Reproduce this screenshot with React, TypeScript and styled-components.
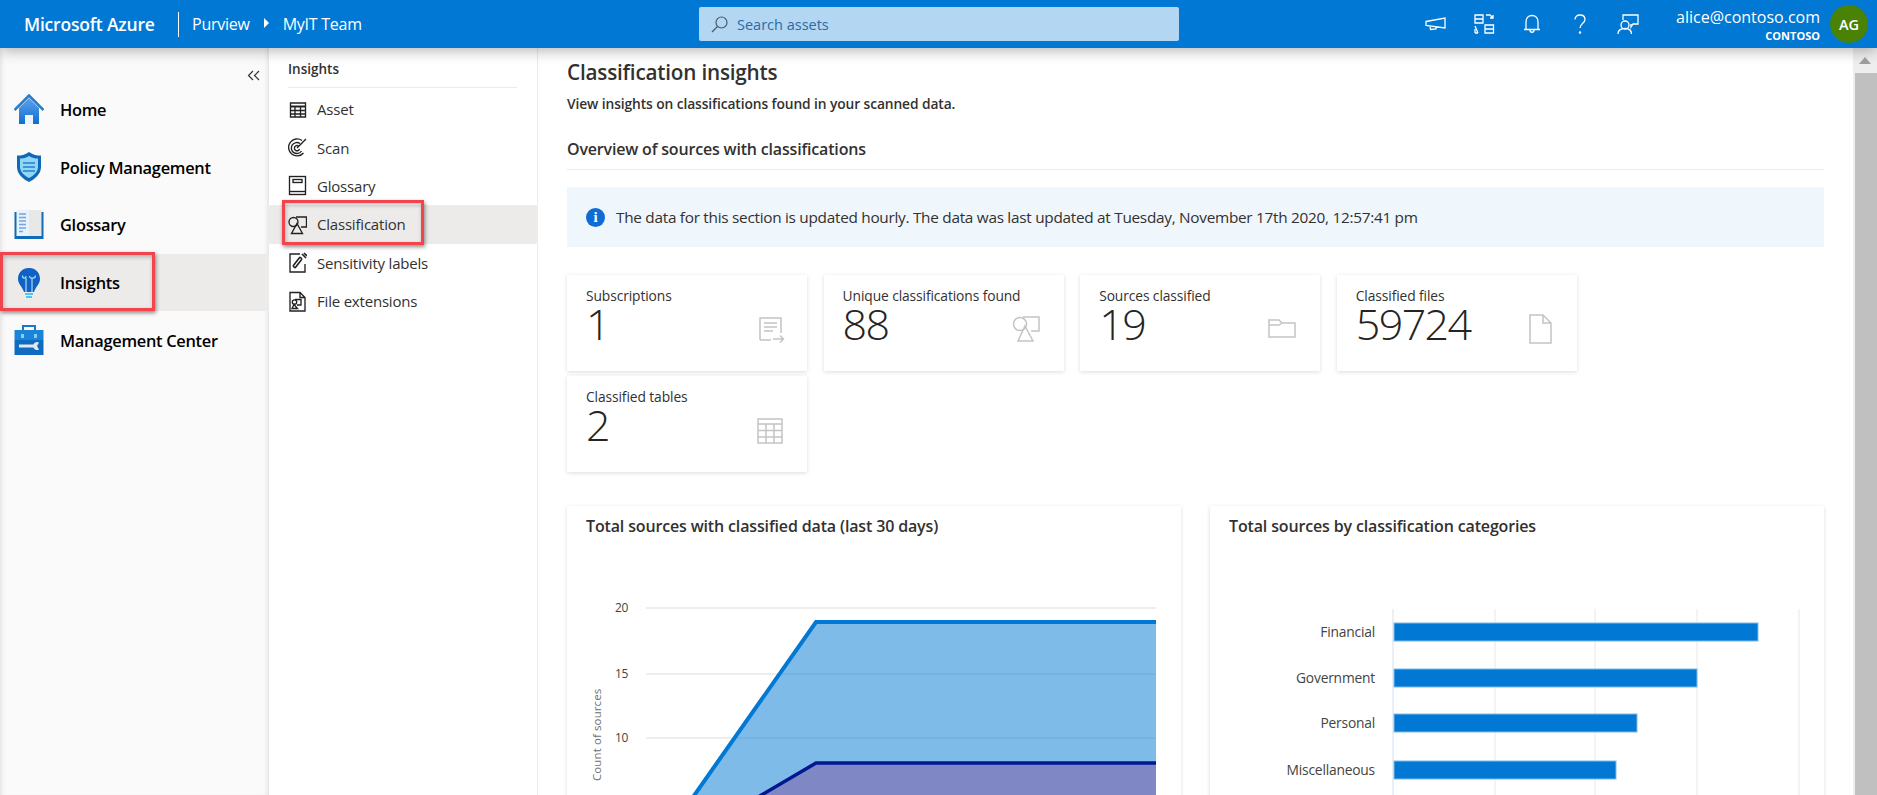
import React from 'react';
import styled, { createGlobalStyle } from 'styled-components';

const GlobalStyle = createGlobalStyle`
  html, body {
    margin: 0;
    padding: 0;
    height: 100%;
    overflow: hidden;
    background: #fff;
    font-family: "Open Sans", "Noto Sans", "Liberation Sans", sans-serif;
    color: #323130;
  }
  * { box-sizing: border-box; }
`;

const Page = styled.div`
  display: flex;
  flex-direction: column;
  height: 795px;
  overflow: hidden;
`;

const TopBar = styled.header`
  height: 48px;
  flex: none;
  display: flex;
  align-items: center;
  background: #0078d4;
  color: #fff;
  position: relative;
  z-index: 3;
  box-shadow: 0 2px 14px rgba(0, 0, 0, 0.32);
`;

const Brand = styled.div`
  width: 178px;
  padding-left: 24px;
  font-size: 17.5px;
  font-weight: 600;
  letter-spacing: -0.2px;
`;

const Crumbs = styled.div`
  width: 521px;
  height: 25px;
  display: flex;
  align-items: center;
  padding-left: 13px;
  border-left: 1px solid #fff;
  font-size: 16px;
  letter-spacing: -0.25px;
`;

const CrumbCaret = styled.span`
  width: 0;
  height: 0;
  margin: 0 14px 2px 14px;
  border-left: 5px solid #fff;
  border-top: 5px solid transparent;
  border-bottom: 5px solid transparent;
`;

const SearchBox = styled.div`
  width: 480px;
  height: 34px;
  display: flex;
  align-items: center;
  gap: 9px;
  padding-left: 12px;
  background: #b3d6f2;
  border-radius: 2px;
  color: #2b6ba6;
  font-size: 14.5px;
`;

const IconTray = styled.div`
  display: flex;
  align-items: center;
  margin-left: 246px;
  gap: 26px;
`;

const TrayIcon = styled.svg`
  width: 22px;
  height: 22px;
  fill: none;
  stroke: #fff;
  stroke-width: 1.3;
`;

const Account = styled.div`
  margin-left: auto;
  text-align: right;
  padding-top: 1px;
`;

const Email = styled.div`
  font-size: 16px;
  line-height: 21px;
`;

const Tenant = styled.div`
  font-size: 11px;
  line-height: 15px;
  font-weight: 700;
`;

const Avatar = styled.div`
  width: 38px;
  height: 38px;
  margin: 0 9px 0 10px;
  border-radius: 50%;
  background: #498205;
  display: flex;
  align-items: center;
  justify-content: center;
  font-size: 14.5px;
  font-weight: 600;
`;

const Body = styled.div`
  flex: 1;
  min-height: 0;
  display: flex;
`;

const MainNav = styled.nav`
  width: 269px;
  flex: none;
  background: #fafafa;
  position: relative;
  box-shadow: inset 5px 0 5px -4px rgba(0, 0, 0, 0.12), inset -5px 0 5px -4px rgba(0, 0, 0, 0.12);
`;

const CollapseRow = styled.div`
  height: 33px;
  display: flex;
  justify-content: flex-end;
  align-items: flex-end;
  padding-right: 9px;
`;

const NavRow = styled.div<{ $active?: boolean }>`
  height: 57.6px;
  display: flex;
  align-items: center;
  gap: 16px;
  padding-left: 14px;
  font-size: 16.4px;
  font-weight: 600;
  letter-spacing: -0.28px;
  color: #000;
  background: ${(p) => (p.$active ? '#edebe9' : 'transparent')};
`;

const NavIcon = styled.svg`
  width: 30px;
  height: 32px;
  flex: none;
`;

const SubNav = styled.nav`
  width: 269px;
  flex: none;
  background: #fff;
  border-right: 1px solid #edebe9;
  position: relative;
`;

const SubNavTitle = styled.div`
  margin: 0 20px 0 19px;
  height: 40px;
  padding-top: 12px;
  font-size: 13.5px;
  font-weight: 600;
  border-bottom: 1px solid #edebe9;
`;

const SubNavList = styled.div`
  padding-top: 2px;
`;

const SubNavRow = styled.div<{ $active?: boolean }>`
  height: 38.4px;
  display: flex;
  align-items: center;
  gap: 10px;
  padding-left: 19px;
  font-size: 15px;
  letter-spacing: -0.2px;
  border-radius: 2px;
  background: ${(p) => (p.$active ? '#edebe9' : 'transparent')};
`;

const SubIcon = styled.svg`
  width: 19px;
  height: 21px;
  flex: none;
  fill: none;
  stroke: #222;
  stroke-width: 1.35;
`;

const RedBox = styled.div<{ $wide: number; $tall: number; $left: number; $top: number }>`
  position: absolute;
  left: ${(p) => p.$left}px;
  top: ${(p) => p.$top}px;
  width: ${(p) => p.$wide}px;
  height: ${(p) => p.$tall}px;
  border: 3px solid #f1444c;
  box-shadow: 1px 2px 4px rgba(0, 0, 0, 0.45), inset 1px 2px 4px rgba(0, 0, 0, 0.25);
  z-index: 2;
`;

const Main = styled.main`
  flex: 1;
  min-width: 0;
  padding: 0 29px 0 29px;
  overflow: hidden;
`;

const Title = styled.h1`
  margin: 11px 0 0;
  font-size: 20.7px;
  line-height: 26px;
  font-weight: 600;
  letter-spacing: -0.2px;
`;

const Subtitle = styled.p`
  margin: 10px 0 0;
  font-size: 13.8px;
  line-height: 18px;
  font-weight: 600;
  letter-spacing: -0.1px;
`;

const SectionTitle = styled.h2`
  margin: 25px 0 0;
  padding-bottom: 9px;
  font-size: 16px;
  line-height: 22px;
  font-weight: 600;
  letter-spacing: -0.18px;
  border-bottom: 1px solid #edebe9;
`;

const InfoBar = styled.div`
  margin-top: 17px;
  height: 60px;
  display: flex;
  align-items: center;
  gap: 11px;
  padding-left: 19px;
  background: #eff6fc;
  font-size: 15.35px;
  letter-spacing: -0.28px;
`;

const InfoDot = styled.span`
  width: 19px;
  height: 19px;
  border-radius: 50%;
  background: #0f6cd6;
  color: #fff;
  display: flex;
  align-items: center;
  justify-content: center;
  font-family: "Liberation Serif", serif;
  font-size: 15px;
  font-weight: 700;
`;

const StatGrid = styled.div`
  margin-top: 28px;
  display: grid;
  grid-template-columns: repeat(4, 240px);
  column-gap: 16.6px;
  row-gap: 5px;
`;

const StatCard = styled.div`
  height: 96px;
  padding: 12px 19px;
  background: #fff;
  box-shadow: 0 1px 4px rgba(0, 0, 0, 0.14);
  position: relative;
`;

const StatLabel = styled.div`
  font-size: 13.8px;
  line-height: 17px;
  letter-spacing: -0.1px;
`;

const StatValue = styled.div`
  font-size: 43px;
  line-height: 40px;
  font-weight: 300;
  letter-spacing: -1.6px;
  color: #252423;
`;

const StatIcon = styled.svg`
  position: absolute;
  right: 22px;
  top: 39px;
  width: 30px;
  height: 30px;
  fill: none;
  stroke: #c4c4c4;
  stroke-width: 1.5;
`;

const Charts = styled.div`
  margin-top: 34px;
  display: grid;
  grid-template-columns: 614px 614px;
  column-gap: 29px;
`;

const ChartCard = styled.section`
  height: 320px;
  padding: 9px 19px;
  background: #fff;
  box-shadow: 0 1px 4px rgba(0, 0, 0, 0.14);
`;

const ChartTitle = styled.h3`
  margin: 0;
  font-size: 16px;
  line-height: 22px;
  font-weight: 600;
  letter-spacing: -0.15px;
`;

const ChartSvg = styled.svg`
  display: block;
  width: 614px;
  height: 280px;
  margin: 0 -19px;
  font-family: "Open Sans", "Noto Sans", sans-serif;
  overflow: hidden;
`;

const Scrollbar = styled.div`
  width: 24px;
  flex: none;
  background: #eeeeee;
  display: flex;
  flex-direction: column;
  align-items: flex-end;
`;

const ScrollArrow = styled.div`
  align-self: center;
  margin-top: 9px;
  width: 0;
  height: 0;
  border-left: 6px solid transparent;
  border-right: 6px solid transparent;
  border-bottom: 7px solid #a0a0a0;
`;

const ScrollThumb = styled.div`
  width: 22px;
  flex: 1;
  margin-top: 9px;
  background: #c0c0c0;
`;

const HomeIcon = () => (
  <NavIcon viewBox="0 0 30 32">
    <defs>
      <linearGradient id="navBlue" x1="0" y1="0" x2="0" y2="1">
        <stop offset="0" stopColor="#5ea0ef" />
        <stop offset="1" stopColor="#0f6fd0" />
      </linearGradient>
    </defs>
    <path d="M5 14 L15 4 L25 14 V30 H5 Z" fill="url(#navBlue)" />
    <path d="M0.5 16 L15 1.5 L29.5 16" fill="none" stroke="#2b7cc4" strokeWidth="2.6" />
    <rect x="11" y="21" width="8" height="9" fill="#eef3f8" />
  </NavIcon>
);

const ShieldIcon = () => (
  <NavIcon viewBox="0 0 30 32">
    <path d="M15 1 C19 4 23 4.5 27 4.5 V16 C27 23 21 28 15 31 C9 28 3 23 3 16 V4.5 C7 4.5 11 4 15 1 Z" fill="#0f68b8" />
    <path d="M15 5 C18 7 21 7.5 24 7.5 V16 C24 21 19 25 15 27 C11 25 6 21 6 16 V7.5 C9 7.5 12 7 15 5 Z" fill="#8fd6f7" />
    <path d="M9 12 H21 M9 16 H21 M9 20 H21" stroke="#3f96d6" strokeWidth="1.8" />
  </NavIcon>
);

const BookIcon = () => (
  <NavIcon viewBox="0 0 30 32">
    <rect x="0.5" y="3" width="29" height="27" fill="#0f6cb8" />
    <rect x="2.5" y="1" width="12.5" height="26" fill="#e9f1fb" />
    <rect x="15" y="1" width="12.5" height="26" fill="#e8e8e8" />
    <path d="M5 5 H12 M5 8.5 H12 M5 12 H12 M5 15.5 H12 M5 19 H12 M5 22.5 H9" stroke="#6ea7e8" strokeWidth="1.4" />
  </NavIcon>
);

const BulbIcon = () => (
  <NavIcon viewBox="0 0 30 32">
    <path d="M15 1 C23 1 26 7 26 12 C26 17 22 19 20 25 H10 C8 19 4 17 4 12 C4 7 7 1 15 1 Z" fill="#0f62c4" />
    <path d="M11 26 H19 V28 H11 Z M12 29 H18 V31 H12 Z" fill="#4ec6ee" />
    <path d="M12 25 V11 M18 25 V11 M8.5 8.5 C8.5 12 12 12 12 9 M15.5 9 C15.5 12 21.5 12 21.5 8.5" fill="none" stroke="#a5dcf7" strokeWidth="1.2" />
  </NavIcon>
);

const ToolboxIcon = () => (
  <NavIcon viewBox="0 0 30 32">
    <path d="M9 6 V2 H21 V6" fill="none" stroke="#1a78c8" strokeWidth="2" />
    <rect x="0.5" y="6" width="29" height="10" fill="#1b84d8" />
    <rect x="0.5" y="16" width="29" height="15" fill="#0f6cc0" />
    <rect x="7" y="10" width="3" height="4" fill="#7fd0f5" />
    <rect x="20" y="10" width="3" height="4" fill="#7fd0f5" />
    <path d="M5 22 H20" stroke="#e4e8ec" strokeWidth="3" />
    <path d="M25 18.5 A4 4 0 1 0 25 25.5 L23 22 Z" fill="#e4e8ec" />
  </NavIcon>
);

const subNavItems: { label: string; active?: boolean; icon: React.ReactNode }[] = [
  {
    label: 'Asset',
    icon: (
      <>
        <path d="M2.5 4 H17.5 V18 H2.5 Z M2.5 11.5 H17.5 M2.5 15 H17.5 M7 7 V18 M12.5 7 V18" />
        <path d="M2.5 7.5 H17.5" strokeWidth="2" />
      </>
    ),
  },
  {
    label: 'Scan',
    icon: (
      <path d="M15.5 16 A8.5 8.5 0 1 1 14 3.5 M13.5 14 A5.5 5.5 0 1 1 12 6.5 M11.5 12 A2.6 2.6 0 1 1 10.5 9 M9 11 L18 2" />
    ),
  },
  {
    label: 'Glossary',
    icon: (
      <>
        <rect x="1.5" y="1.5" width="16" height="18" />
        <path d="M1.5 16.5 H17.5" />
        <rect x="5" y="4.5" width="9" height="3" />
      </>
    ),
  },
  {
    label: 'Classification',
    active: true,
    icon: (
      <>
        <circle cx="5.5" cy="8" r="4.5" />
        <path d="M8 3 H18.5 V13 H13" />
        <path d="M9 9.5 L14.5 19.5 H3.5 Z" />
      </>
    ),
  },
  {
    label: 'Sensitivity labels',
    icon: (
      <>
        <path d="M12 2 H2 V20 H17 V12" />
        <path d="M5 14 L12 5 M7 16 L14 7 M5 14 L7 16 M12 5 L14 7" strokeWidth="1.6" />
        <path d="M14 2 L18 6 M16 1 L19 4" strokeWidth="1.6" />
      </>
    ),
  },
  {
    label: 'File extensions',
    icon: (
      <>
        <path d="M2 1.5 H12 L17 6.5 V20 H2 Z M12 1.5 V6.5 H17" />
        <circle cx="6.5" cy="11" r="2.2" />
        <path d="M7 8.5 H13 V14 H9 M6 13.5 L9.5 17.5 H4 Z" />
      </>
    ),
  },
];

const stats: { label: string; value: string; icon: React.ReactNode }[] = [
  {
    label: 'Subscriptions',
    value: '1',
    icon: (
      <path d="M5 26 V4 H26 V19 M9 9 H22 M9 13 H22 M9 17 H18 M5 26 H16 M18 25 H28 M25 21.5 L28.5 25 L25 28.5" />
    ),
  },
  {
    label: 'Unique classifications found',
    value: '88',
    icon: (
      <>
        <circle cx="8" cy="10" r="6.5" />
        <path d="M11 3 H27 V17 H19" />
        <path d="M13 12 L21 27 H6 Z" />
      </>
    ),
  },
  {
    label: 'Sources classified',
    value: '19',
    icon: <path d="M1 23 V6 H11 L14 9 H27 V23 Z M1 11 H11 L14 9" />,
  },
  {
    label: 'Classified files',
    value: '59724',
    icon: <path d="M5 1 H18 L26 9 V29 H5 Z M18 1 V9 H26" />,
  },
  {
    label: 'Classified tables',
    value: '2',
    icon: (
      <path d="M3 4 H27 V28 H3 Z M3 9 H27 M3 15.5 H27 M3 22 H27 M11 9 V28 M19 9 V28" />
    ),
  },
];

const categories = [
  { name: 'Financial', y: 116, end: 364 },
  { name: 'Government', y: 162, end: 303 },
  { name: 'Personal', y: 207, end: 243 },
  { name: 'Miscellaneous', y: 254, end: 222 },
];

// x positions in the svgs are relative to the card, y to the top of the svg
const AreaChart = () => (
  <ChartSvg viewBox="0 0 614 280">
    {[
      { label: '20', y: 71 },
      { label: '15', y: 137 },
      { label: '10', y: 201 },
    ].map((tick) => (
      <g key={tick.label}>
        <line x1="79" x2="589" y1={tick.y} y2={tick.y} stroke="#e8e8e8" strokeWidth="1.5" />
        <text x="61" y={tick.y + 4} textAnchor="end" fontSize="12" letterSpacing="-0.4" fill="#444">
          {tick.label}
        </text>
      </g>
    ))}
    <text transform="translate(34 244) rotate(-90)" fontSize="11.5" fill="#707070" letterSpacing="0.1">
      Count of sources
    </text>
    <path d="M112 280 L249 85 H589 V280 Z" fill="#0078d4" fillOpacity="0.5" />
    <path d="M112 280 L249 85 H589" fill="none" stroke="#0078d4" strokeWidth="4" />
    <path d="M157 280 L249 226 H589 V280 Z" fill="#7f88c4" />
    <path d="M157 280 L249 226 H589" fill="none" stroke="#00188f" strokeWidth="3.5" />
  </ChartSvg>
);

const BarChart = () => (
  <ChartSvg viewBox="0 0 614 280">
    {[183, 285, 385, 487, 589].map((x) => (
      <line key={x} x1={x} x2={x} y1="72" y2="280" stroke={x === 183 ? '#d5e0f0' : '#e8e8e8'} strokeWidth="1" />
    ))}
    {categories.map((c) => (
      <g key={c.name}>
        <rect x="184" y={c.y - 30} width={c.end} height="18" fill="#0078d4" stroke="#7fbbea" strokeWidth="1" />
        <text x="165" y={c.y - 16} textAnchor="end" fontSize="13.8" letterSpacing="-0.2" fill="#444">
          {c.name}
        </text>
      </g>
    ))}
  </ChartSvg>
);

const App: React.FC = () => (
  <Page>
    <GlobalStyle />
    <TopBar>
      <Brand>Microsoft Azure</Brand>
      <Crumbs>
        Purview
        <CrumbCaret />
        MyIT Team
      </Crumbs>
      <SearchBox>
        <svg width="17" height="17" viewBox="0 0 17 17" fill="none" stroke="#4a5a68" strokeWidth="1.2">
          <circle cx="10.5" cy="6.5" r="5.5" />
          <path d="M6.5 10.5 L1 16" />
        </svg>
        Search assets
      </SearchBox>
      <IconTray>
        <TrayIcon viewBox="0 0 22 22">
          <path d="M1 8.5 L20 5 V15 L1 12.5 Z M5 13 L5.5 16.5 L11 16 V14" />
        </TrayIcon>
        <TrayIcon viewBox="0 0 22 22">
          <path d="M2 2 H10 V10 H2 Z M2 6 H10 M13 2 H17 L20 5 M20 2 V5 H17 M12 12 H20.5 V20 H12 Z M12 16 H20.5 M2 13 L5 20 M2 20 H5 M2 16 V20" />
        </TrayIcon>
        <TrayIcon viewBox="0 0 22 22">
          <path d="M5 16 V9 C5 5 7.5 2.5 11 2.5 C14.5 2.5 17 5 17 9 V16 M3 16.5 H19 M9 17 C9 20 13 20 13 17" />
        </TrayIcon>
        <TrayIcon viewBox="0 0 22 22">
          <path d="M6 6.5 C6 3.5 8 2 11 2 C14 2 16 3.5 16 6.5 C16 10 11 10.5 11 15" />
          <circle cx="11" cy="19.5" r="0.6" />
        </TrayIcon>
        <TrayIcon viewBox="0 0 22 22">
          <path d="M6 7 V2 H21 V11 H16 L14 14 V11" />
          <circle cx="8" cy="12" r="4" />
          <path d="M1 21 C1 17 4 15.5 8 15.5 C12 15.5 14.5 17 14.5 21" />
        </TrayIcon>
      </IconTray>
      <Account>
        <Email>alice@contoso.com</Email>
        <Tenant>CONTOSO</Tenant>
      </Account>
      <Avatar>AG</Avatar>
    </TopBar>
    <Body>
      <MainNav>
        <CollapseRow>
          <svg width="13" height="11" viewBox="0 0 13 11" fill="none" stroke="#333" strokeWidth="1.2">
            <path d="M6 1 L1.5 5.5 L6 10 M12 1 L7.5 5.5 L12 10" />
          </svg>
        </CollapseRow>
        <NavRow><HomeIcon />Home</NavRow>
        <NavRow><ShieldIcon />Policy Management</NavRow>
        <NavRow><BookIcon />Glossary</NavRow>
        <NavRow $active><BulbIcon />Insights</NavRow>
        <NavRow><ToolboxIcon />Management Center</NavRow>
        <RedBox $left={0} $top={204} $wide={155} $tall={59} />
      </MainNav>
      <SubNav>
        <SubNavTitle>Insights</SubNavTitle>
        <SubNavList>
          {subNavItems.map((item) => (
            <SubNavRow key={item.label} $active={item.active}>
              <SubIcon viewBox="0 0 19 21">{item.icon}</SubIcon>
              {item.label}
            </SubNavRow>
          ))}
        </SubNavList>
        <RedBox $left={13} $top={152} $wide={142} $tall={45} />
      </SubNav>
      <Main>
        <Title>Classification insights</Title>
        <Subtitle>View insights on classifications found in your scanned data.</Subtitle>
        <SectionTitle>Overview of sources with classifications</SectionTitle>
        <InfoBar>
          <InfoDot>i</InfoDot>
          The data for this section is updated hourly. The data was last updated at Tuesday, November 17th 2020, 12:57:41 pm
        </InfoBar>
        <StatGrid>
          {stats.map((s) => (
            <StatCard key={s.label}>
              <StatLabel>{s.label}</StatLabel>
              <StatValue>{s.value}</StatValue>
              <StatIcon viewBox="0 0 30 30">{s.icon}</StatIcon>
            </StatCard>
          ))}
        </StatGrid>
        <Charts>
          <ChartCard>
            <ChartTitle>Total sources with classified data (last 30 days)</ChartTitle>
            <AreaChart />
          </ChartCard>
          <ChartCard>
            <ChartTitle>Total sources by classification categories</ChartTitle>
            <BarChart />
          </ChartCard>
        </Charts>
      </Main>
      <Scrollbar>
        <ScrollArrow />
        <ScrollThumb />
      </Scrollbar>
    </Body>
  </Page>
);

export default App;
